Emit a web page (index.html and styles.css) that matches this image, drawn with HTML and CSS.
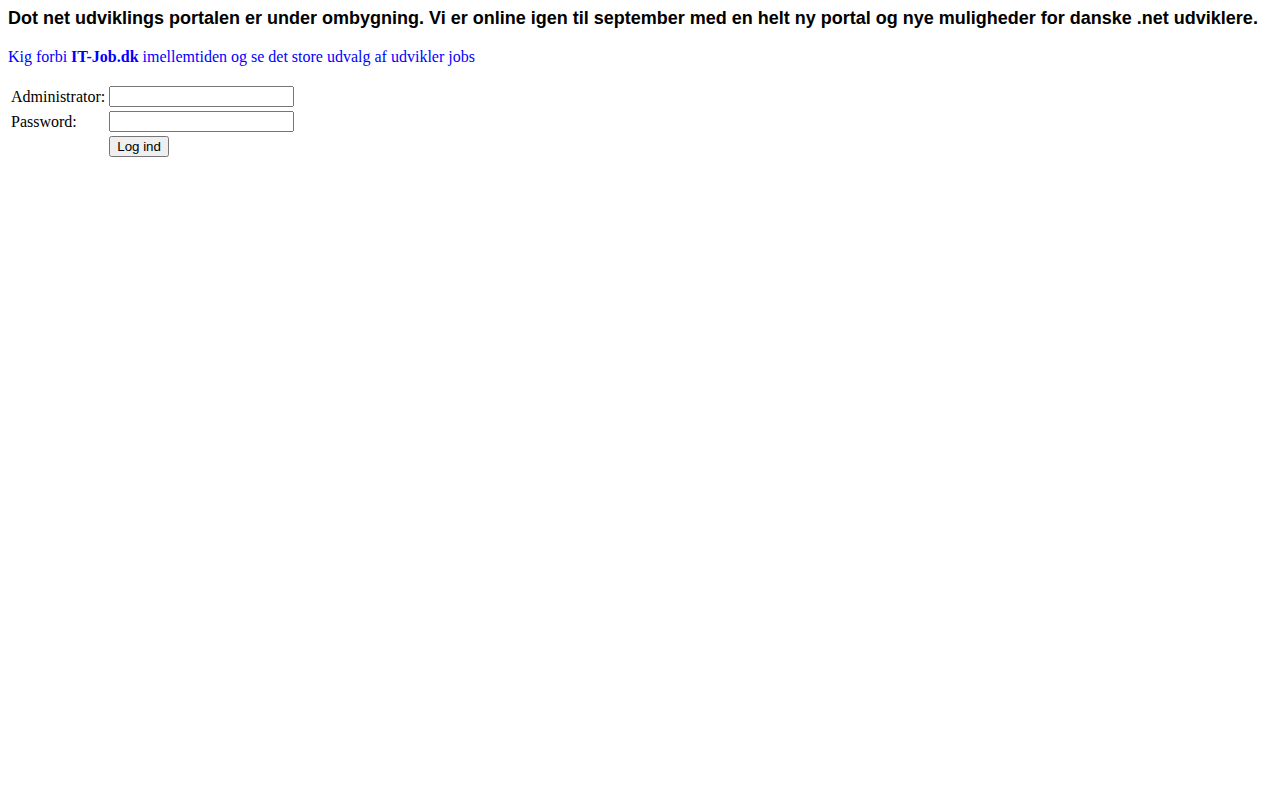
FILE: index.html
```html
<!DOCTYPE html>
<html lang="da">
<head>
    <meta charset="UTF-8">
    <title>Dot net udvikling</title>
    <link rel="stylesheet" href="styles.css">
</head>
<body>
    <div class="notice">Dot net udviklings portalen er under ombygning. Vi er online igen til september med en helt ny portal og nye muligheder for danske .net udviklere.</div>
    <p class="jobs"><a href="#">Kig forbi <b>IT-Job.dk</b> imellemtiden og se det store udvalg af udvikler jobs</a></p>
    <form class="login">
        <table>
            <tr>
                <td>Administrator:</td>
                <td><input type="text" name="user"></td>
            </tr>
            <tr>
                <td>Password:</td>
                <td><input type="password" name="pass"></td>
            </tr>
            <tr>
                <td></td>
                <td><button type="submit">Log ind</button></td>
            </tr>
        </table>
    </form>
</body>
</html>
```

FILE: styles.css
```css
body {
    margin: 8px;
    font-family: "Liberation Serif", "Times New Roman", serif;
    font-size: 16px;
    color: #000;
    background: #fff;
}
.notice {
    font-family: "Liberation Sans", Arial, sans-serif;
    font-size: 18px;
    font-weight: bold;
}
.jobs {
    margin: 19px 0 17px;
}
.jobs a {
    color: #0000ff;
    text-decoration: none;
}
.login table {
    border-spacing: 2px;
}
.login td {
    padding: 1px;
}
.login input {
    width: 185px;
    height: 21px;
    box-sizing: border-box;
    margin: 0;
    font-size: 13.333px;
}
.login button {
    height: 21px;
    margin: 0;
    font-family: "Liberation Sans", Arial, sans-serif;
    font-size: 13.333px;
}
```
